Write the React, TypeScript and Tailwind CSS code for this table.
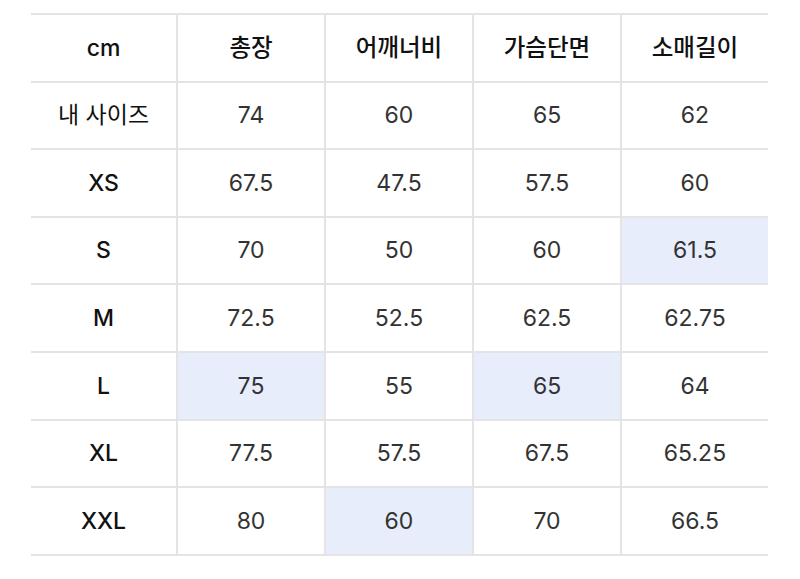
const headers = ["총장", "어깨너비", "가슴단면", "소매길이"];

// 사이즈표 데이터 (hl: 강조된 칸 인덱스)
const rows = [
  { label: "내 사이즈", values: ["74", "60", "65", "62"], hl: [] as number[] },
  { label: "XS", values: ["67.5", "47.5", "57.5", "60"], hl: [] },
  { label: "S", values: ["70", "50", "60", "61.5"], hl: [3] },
  { label: "M", values: ["72.5", "52.5", "62.5", "62.75"], hl: [] },
  { label: "L", values: ["75", "55", "65", "64"], hl: [0, 2] },
  { label: "XL", values: ["77.5", "57.5", "67.5", "65.25"], hl: [] },
  { label: "XXL", values: ["80", "60", "70", "66.5"], hl: [1] },
];

const font = { fontFamily: 'Inter, "Noto Sans CJK KR", sans-serif' };

const App = () => {
  return (
    <div className="w-[800px] h-[579px] bg-white overflow-hidden" style={font}>
      <div className="ml-[31px] mt-[13px] w-[737px] border-t-2 border-[#e4e4e4]">
        {/* Header */}
        <div className="grid grid-cols-[145px_repeat(4,148px)] h-[67.6px]">
          <div className="flex items-center justify-center border-b-2 border-[#e4e4e4] text-[23px] font-medium text-[#111]">
            cm
          </div>
          {headers.map((h) => (
            <div
              key={h}
              className="flex items-center justify-center border-b-2 border-l-2 border-[#e4e4e4] text-[23.5px] font-medium text-[#111]"
            >
              {h}
            </div>
          ))}
        </div>

        {rows.map((row) => (
          <div key={row.label} className="grid grid-cols-[145px_repeat(4,148px)] h-[67.6px]">
            <div
              className={
                "flex items-center justify-center border-b-2 border-[#e4e4e4] text-[23px] text-[#111] " +
                (row.label === "내 사이즈" ? "font-normal" : "font-medium")
              }
            >
              {row.label}
            </div>
            {row.values.map((v, i) => (
              <div
                key={i}
                className={
                  "flex items-center justify-center border-b-2 border-l-2 border-[#e4e4e4] text-[23px] text-[#333] " +
                  (row.hl.includes(i) ? "bg-[#e8edfc]" : "bg-white")
                }
              >
                {v}
              </div>
            ))}
          </div>
        ))}
      </div>
    </div>
  );
};

export default App;
